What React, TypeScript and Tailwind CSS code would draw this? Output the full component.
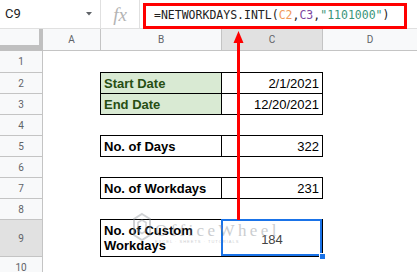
import React from 'react'

type Row = {
  n: number
  label?: string
  value?: string
  green?: boolean
  first?: boolean
  tall?: boolean
  selected?: boolean
}

const rows: Row[] = [
  { n: 1 },
  { n: 2, label: 'Start Date', value: '2/1/2021', green: true, first: true },
  { n: 3, label: 'End Date', value: '12/20/2021', green: true },
  { n: 4 },
  { n: 5, label: 'No. of Days', value: '322', first: true },
  { n: 6 },
  { n: 7, label: 'No. of Workdays', value: '231', first: true },
  { n: 8 },
  { n: 9, label: 'No. of Custom Workdays', value: '184', first: true, tall: true, selected: true },
  { n: 10 },
]

function FormulaBar() {
  return (
    <div className="flex h-[29px] border-b border-[#e0e0e0] bg-white">
      <div className="flex w-[101px] items-center justify-between border-r border-[#e0e0e0] pl-[5px] pr-[8px]">
        <span className="font-['Roboto'] text-[13px] text-[#222]">C9</span>
        <svg width="6" height="4" viewBox="0 0 6 4">
          <path d="M0 0h6L3 3.5z" fill="#5f6368" />
        </svg>
      </div>
      <div className="flex w-[39px] items-center justify-center border-r border-[#e0e0e0]">
        <span className="font-['Liberation_Serif'] text-[19px] italic leading-none text-[#b4b4b4]">fx</span>
      </div>
      {/* highlighted formula input */}
      <div className="ml-[3px] mt-[3px] flex h-[26px] w-[264px] shrink-0 items-center self-start border-[3px] border-[#ff0000] bg-white pl-[8px]">
        <span className="font-['DejaVu_Sans_Mono'] text-[11.5px] leading-none text-[#222] whitespace-pre">
          =NETWORKDAYS.INTL(<span className="text-[#f29a5a]">C2</span>,<span className="text-[#7d45a0]">C3</span>,
          <span className="text-[#3a957a]">"1101000"</span>)
        </span>
      </div>
    </div>
  )
}

function HeaderRow() {
  const cols = [
    { l: 'A', w: 'w-[58px]' },
    { l: 'B', w: 'w-[121px]' },
    { l: 'C', w: 'w-[101px]', sel: true },
  ]
  return (
    <div className="flex h-[22px] border-b border-[#c4c4c4] bg-[#f8f9fa] font-['Roboto'] text-[10px] text-[#5f6368]">
      <div className="h-[22px] w-[43px] shrink-0 border-r-4 border-b-[6px] border-[#c0c0c0]" />
      {cols.map((c) => (
        <div
          key={c.l}
          className={`${c.w} flex shrink-0 items-center justify-center border-r border-[#c4c4c4] ${c.sel ? 'bg-[#e1e1e1]' : ''}`}
        >
          {c.l}
        </div>
      ))}
      <div className="flex flex-1 items-center justify-center">D</div>
    </div>
  )
}

function SheetRow({ row }: { row: Row }) {
  const h = row.n === 1 ? 'h-[22px]' : row.tall ? 'h-[37px]' : 'h-[21px]'
  const top = row.first ? '-mt-px border-t' : ''
  return (
    <div className={`flex ${h}`}>
      <div
        className={`flex w-[43px] shrink-0 items-center justify-center border-r border-b border-[#c4c4c4] font-['Roboto'] text-[10px] text-[#5f6368] ${row.selected ? 'bg-[#e1e1e1]' : 'bg-[#f8f9fa]'}`}
      >
        {row.n}
      </div>
      <div className="w-[58px] shrink-0" />
      {row.label ? (
        <>
          <div
            className={`-ml-px flex w-[122px] shrink-0 items-center border-l border-r border-b border-black px-[3px] text-[13px] font-bold leading-[15px] ${top} ${row.green ? 'bg-[#d9ead3] text-[#274e13]' : 'text-black'}`}
          >
            {row.tall ? (
              <span>
                No. of Custom
                <br />
                Workdays
              </span>
            ) : (
              row.label
            )}
          </div>
          <div
            className={`relative flex w-[101px] shrink-0 items-center border-r border-b border-black px-[3px] text-[13px] leading-[15px] ${top} ${row.selected ? 'justify-center pt-[3px] text-[#444]' : 'justify-end text-black'}`}
          >
            {row.value}
            {row.selected && (
              <>
                <div className="absolute -left-px -top-px right-0 bottom-0 border-2 border-[#1a73e8]" />
                <div className="absolute -right-[4px] -bottom-[4px] h-[7px] w-[7px] border border-white bg-[#1a73e8]" />
              </>
            )}
          </div>
        </>
      ) : null}
    </div>
  )
}

export default function App() {
  return (
    <div className="relative h-[272px] w-[417px] overflow-hidden bg-white font-['Liberation_Sans']">
      <FormulaBar />
      <HeaderRow />
      {rows.map((r) => (
        <SheetRow key={r.n} row={r} />
      ))}

      {/* watermark */}
      <div className="pointer-events-none absolute left-[132px] top-[212px] flex items-start gap-[3px] opacity-40">
        <svg width="20" height="32" viewBox="0 0 20 32">
          <path d="M10 2 L18 7 L18 23 L10 28 L2 23 L2 7 Z" fill="none" stroke="#8a8f96" strokeWidth="2" />
          <path d="M10 8 L14 10.5 L14 19 L10 21.5 L6 19 L6 10.5 Z" fill="none" stroke="#8a8f96" strokeWidth="1.5" />
        </svg>
        <div className="mt-[10px] flex flex-col">
          <span className="font-['Liberation_Serif'] text-[17px] leading-[17px] tracking-[3.4px] text-[#7d838a]">OfficeWheel</span>
          <span className="font-['Liberation_Sans'] text-[4px] tracking-[1px] text-[#7d838a]">EXCEL · SHEETS · TUTORIALS</span>
        </div>
      </div>

      {/* annotation arrow */}
      <svg className="pointer-events-none absolute left-0 top-0" width="417" height="272">
        <line x1="238.5" y1="40" x2="238.5" y2="220" stroke="#ff0000" strokeWidth="3" />
        <path d="M238.5 31 L233.5 43 L243.5 43 Z" fill="#ff0000" />
      </svg>
    </div>
  )
}
